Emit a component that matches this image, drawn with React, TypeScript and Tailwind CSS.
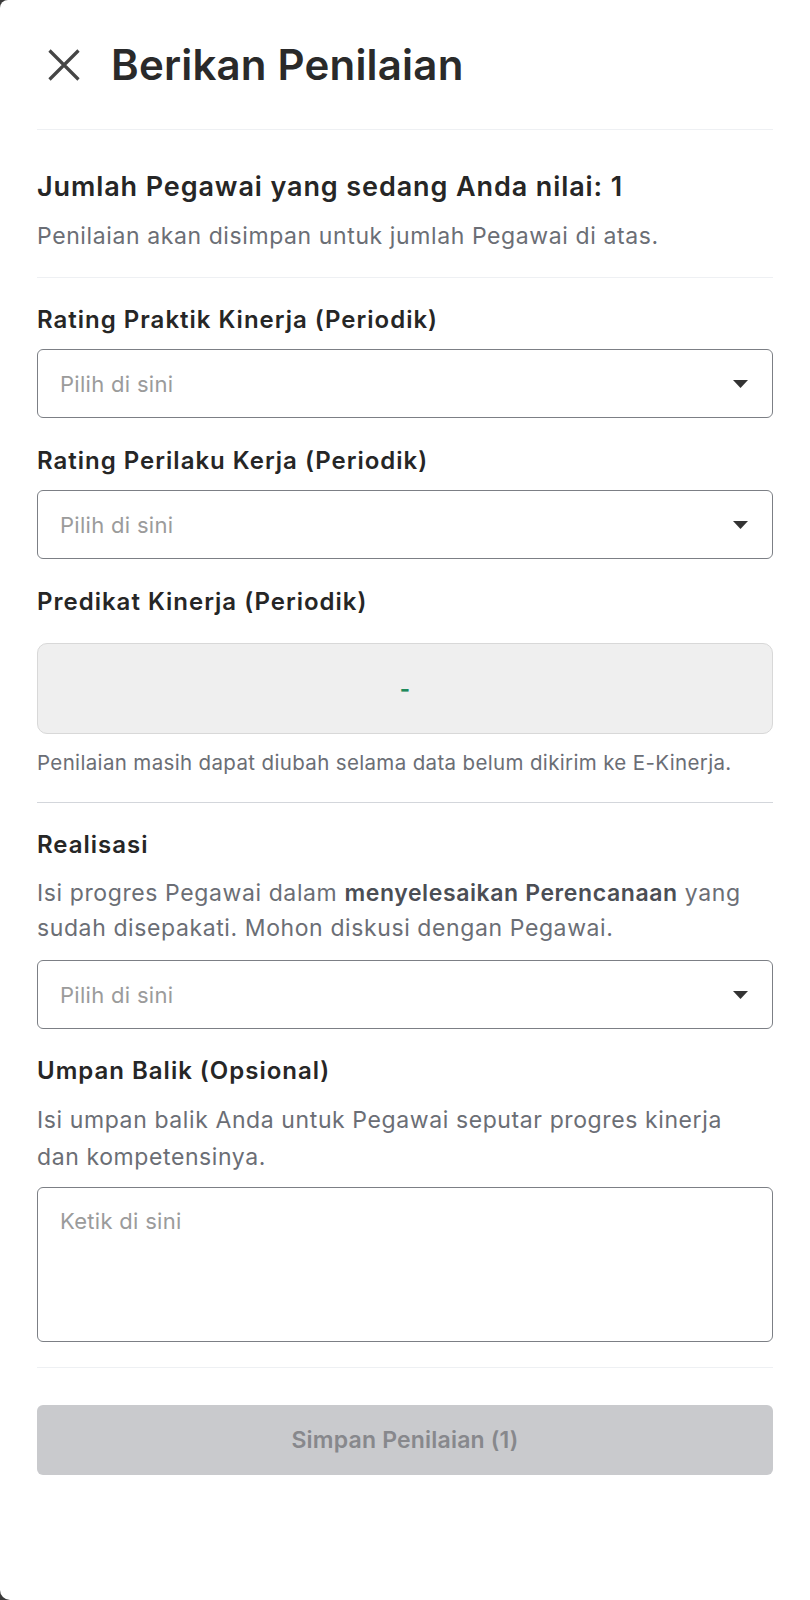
import React from "react";

const font = { fontFamily: "Inter, 'Noto Sans', sans-serif" };

const Caret = () => (
  <svg width="15" height="8" viewBox="0 0 15 8" className="shrink-0">
    <path d="M0 0 L15 0 L7.5 8 Z" fill="#333333" />
  </svg>
);

const SelectBox = ({ placeholder }: { placeholder: string }) => (
  <div className="flex h-[69px] items-center justify-between rounded-[6px] border-[1.5px] border-[#7c7f85] pl-[22px] pr-[24px]">
    <span className="text-[22px] leading-[32px] tracking-[0.3px] text-[#9b9b9b]">{placeholder}</span>
    <Caret />
  </div>
);

const Label = ({ children }: { children: React.ReactNode }) => (
  <h3 className="text-[24px] font-semibold leading-[32px] tracking-[1px] text-[#262626]">{children}</h3>
);

const App = () => {
  return (
    <div className="min-h-[1600px] w-full bg-[#3a3a3a]" style={font}>
      <div className="min-h-[1600px] rounded-tl-[8px] rounded-bl-[10px] bg-white px-[37px]">
        <header className="flex h-[130px] items-center gap-[31px] border-b border-[#eef0f3] pl-[11px]">
          <svg width="32" height="32" viewBox="0 0 32 32" className="shrink-0">
            <path d="M1.5 1.5 L30.5 30.5 M30.5 1.5 L1.5 30.5" stroke="#454545" strokeWidth="3.2" />
          </svg>
          <h1 className="text-[42px] font-semibold leading-[48px] tracking-[0.2px] text-[#2a2a2a]">
            Berikan Penilaian
          </h1>
        </header>

        <section className="border-b border-[#eef0f3] pt-[41px] pb-[25px]">
          <h2 className="text-[27px] font-semibold leading-[32px] tracking-[0.9px] text-[#262626]">
            Jumlah Pegawai yang sedang Anda nilai: 1
          </h2>
          <p className="mt-[17px] text-[23px] leading-[32px] tracking-[0.6px] text-[#6b6e75]">
            Penilaian akan disimpan untuk jumlah Pegawai di atas.
          </p>
        </section>

        <section className="border-b border-[#d3d6db] pt-[26px] pb-[25px]">
          <Label>Rating Praktik Kinerja (Periodik)</Label>
          <div className="mt-[13px]">
            <SelectBox placeholder="Pilih di sini" />
          </div>

          <div className="mt-[27px]">
            <Label>Rating Perilaku Kerja (Periodik)</Label>
          </div>
          <div className="mt-[13px]">
            <SelectBox placeholder="Pilih di sini" />
          </div>

          <div className="mt-[27px]">
            <Label>Predikat Kinerja (Periodik)</Label>
          </div>
          <div className="mt-[25px] flex h-[91px] items-center justify-center rounded-[10px] border border-[#d8d8d8] bg-[#efefef]">
            <span className="text-[22px] font-bold leading-[32px] text-[#1f8a5b]">-</span>
          </div>
          <p className="mt-[15px] text-[20.5px] leading-[28px] tracking-[0.35px] text-[#6b6e75]">
            Penilaian masih dapat diubah selama data belum dikirim ke E-Kinerja.
          </p>
        </section>

        <section className="border-b border-[#eef0f3] pt-[26px] pb-[25px]">
          <Label>Realisasi</Label>
          <p className="mt-[15px] text-[23px] leading-[35px] tracking-[0.6px] text-[#6b6e75]">
            Isi progres Pegawai dalam{" "}
            <span className="font-semibold text-[#4b4e55]">menyelesaikan Perencanaan</span> yang
            sudah disepakati. Mohon diskusi dengan Pegawai.
          </p>
          <div className="mt-[14px]">
            <SelectBox placeholder="Pilih di sini" />
          </div>

          <div className="mt-[26px]">
            <Label>Umpan Balik (Opsional)</Label>
          </div>
          <p className="mt-[15px] pr-[30px] text-[23px] leading-[37px] tracking-[0.6px] text-[#6b6e75]">
            Isi umpan balik Anda untuk Pegawai seputar progres kinerja dan kompetensinya.
          </p>
          <div className="mt-[11px] h-[155px] rounded-[6px] border-[1.5px] border-[#7c7f85] px-[22px] pt-[17px]">
            <span className="text-[22px] leading-[32px] tracking-[0.3px] text-[#9b9b9b]">Ketik di sini</span>
          </div>
        </section>

        <div className="pt-[37px]">
          <button className="flex h-[70px] w-full items-center justify-center rounded-[6px] bg-[#c9cacd] text-[23px] font-semibold tracking-[0.2px] text-[#87888c]">
            Simpan Penilaian (1)
          </button>
        </div>
      </div>
    </div>
  );
};

export default App;
